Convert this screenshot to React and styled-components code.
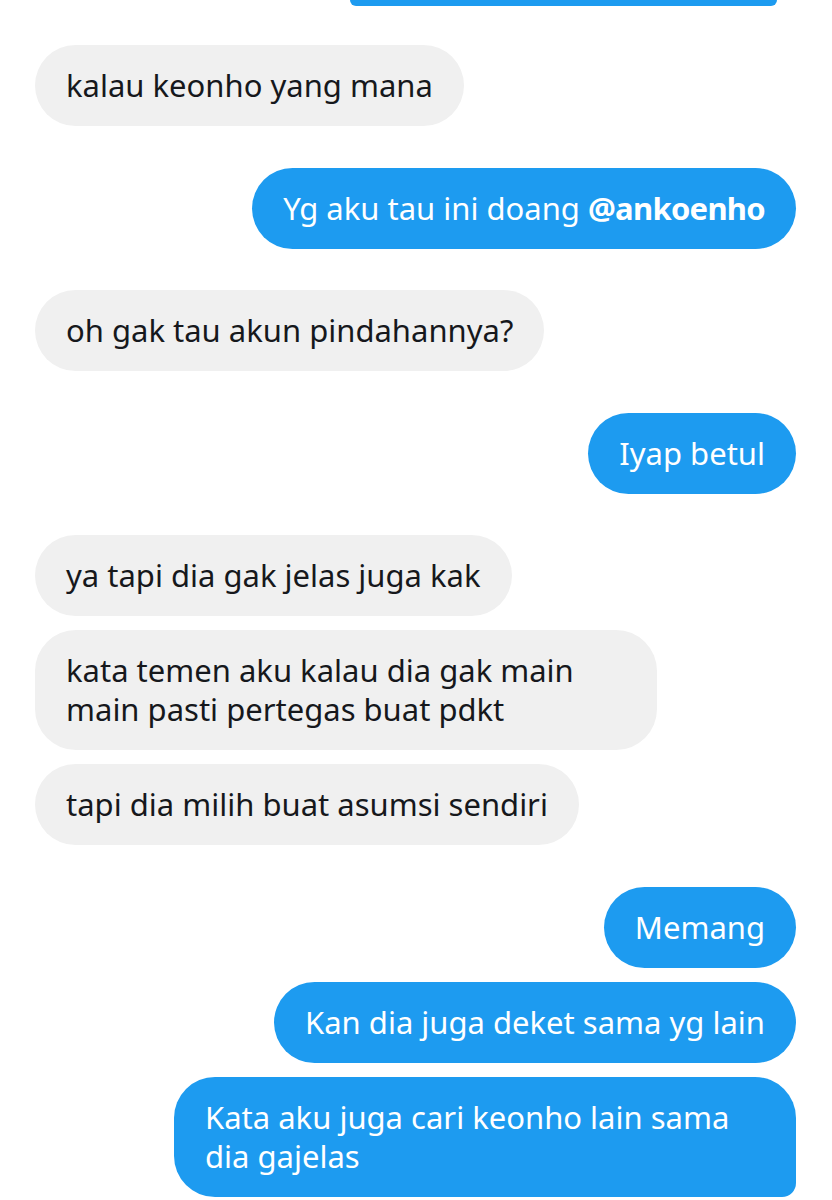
import styled, { createGlobalStyle } from "styled-components";

const GlobalStyle = createGlobalStyle`
  html, body {
    margin: 0;
    padding: 0;
    background: #ffffff;
  }
  body {
    font-family: "Noto Sans", "Open Sans", sans-serif;
  }
`;

export const Thread = styled.div`
  width: 832px;
  height: 1200px;
  overflow: hidden;
  box-sizing: border-box;
  padding: 0 36px 0 35px;
  display: flex;
  flex-direction: column;
`;

export const Group = styled.div`
  display: flex;
  flex-direction: column;
  align-items: ${(p) => (p.$mine ? "flex-end" : "flex-start")};
  gap: 14px;
  margin-top: ${(p) => p.$top ?? 41.5}px;
`;

export const Bubble = styled.div`
  box-sizing: border-box;
  max-width: 622px;
  padding: 21px 31px;
  border-radius: 41px;
  font-size: 31px;
  line-height: 39px;
  color: ${(p) => (p.$mine ? "#ffffff" : "#16181c")};
  background: ${(p) => (p.$mine ? "#1d9bf0" : "#f0f0f0")};
  ${(p) => p.$tail && "border-bottom-right-radius: 14px;"}
`;

/* bottom edge of the previous message, scrolled mostly off screen */
export const CutBubble = styled.div`
  width: 427px;
  height: 6px;
  margin-right: 19px;
  border-radius: 0 0 14px 14px;
  background: #1d9bf0;
`;

export const Mention = styled.b`
  font-weight: 700;
  letter-spacing: -0.7px;
`;

export default function App() {
  return (
    <>
      <GlobalStyle />
      <Thread>
        <Group $mine $top={0}>
          <CutBubble />
        </Group>

        <Group $top={39}>
          <Bubble>kalau keonho yang mana</Bubble>
        </Group>

        <Group $mine>
          <Bubble $mine>
            Yg aku tau ini doang <Mention>@ankoenho</Mention>
          </Bubble>
        </Group>

        <Group>
          <Bubble>oh gak tau akun pindahannya?</Bubble>
        </Group>

        <Group $mine>
          <Bubble $mine>Iyap betul</Bubble>
        </Group>

        <Group>
          <Bubble>ya tapi dia gak jelas juga kak</Bubble>
          <Bubble>kata temen aku kalau dia gak main main pasti pertegas buat pdkt</Bubble>
          <Bubble>tapi dia milih buat asumsi sendiri</Bubble>
        </Group>

        <Group $mine>
          <Bubble $mine>Memang</Bubble>
          <Bubble $mine>Kan dia juga deket sama yg lain</Bubble>
          <Bubble $mine $tail>
            Kata aku juga cari keonho lain sama dia gajelas
          </Bubble>
        </Group>
      </Thread>
    </>
  );
}
